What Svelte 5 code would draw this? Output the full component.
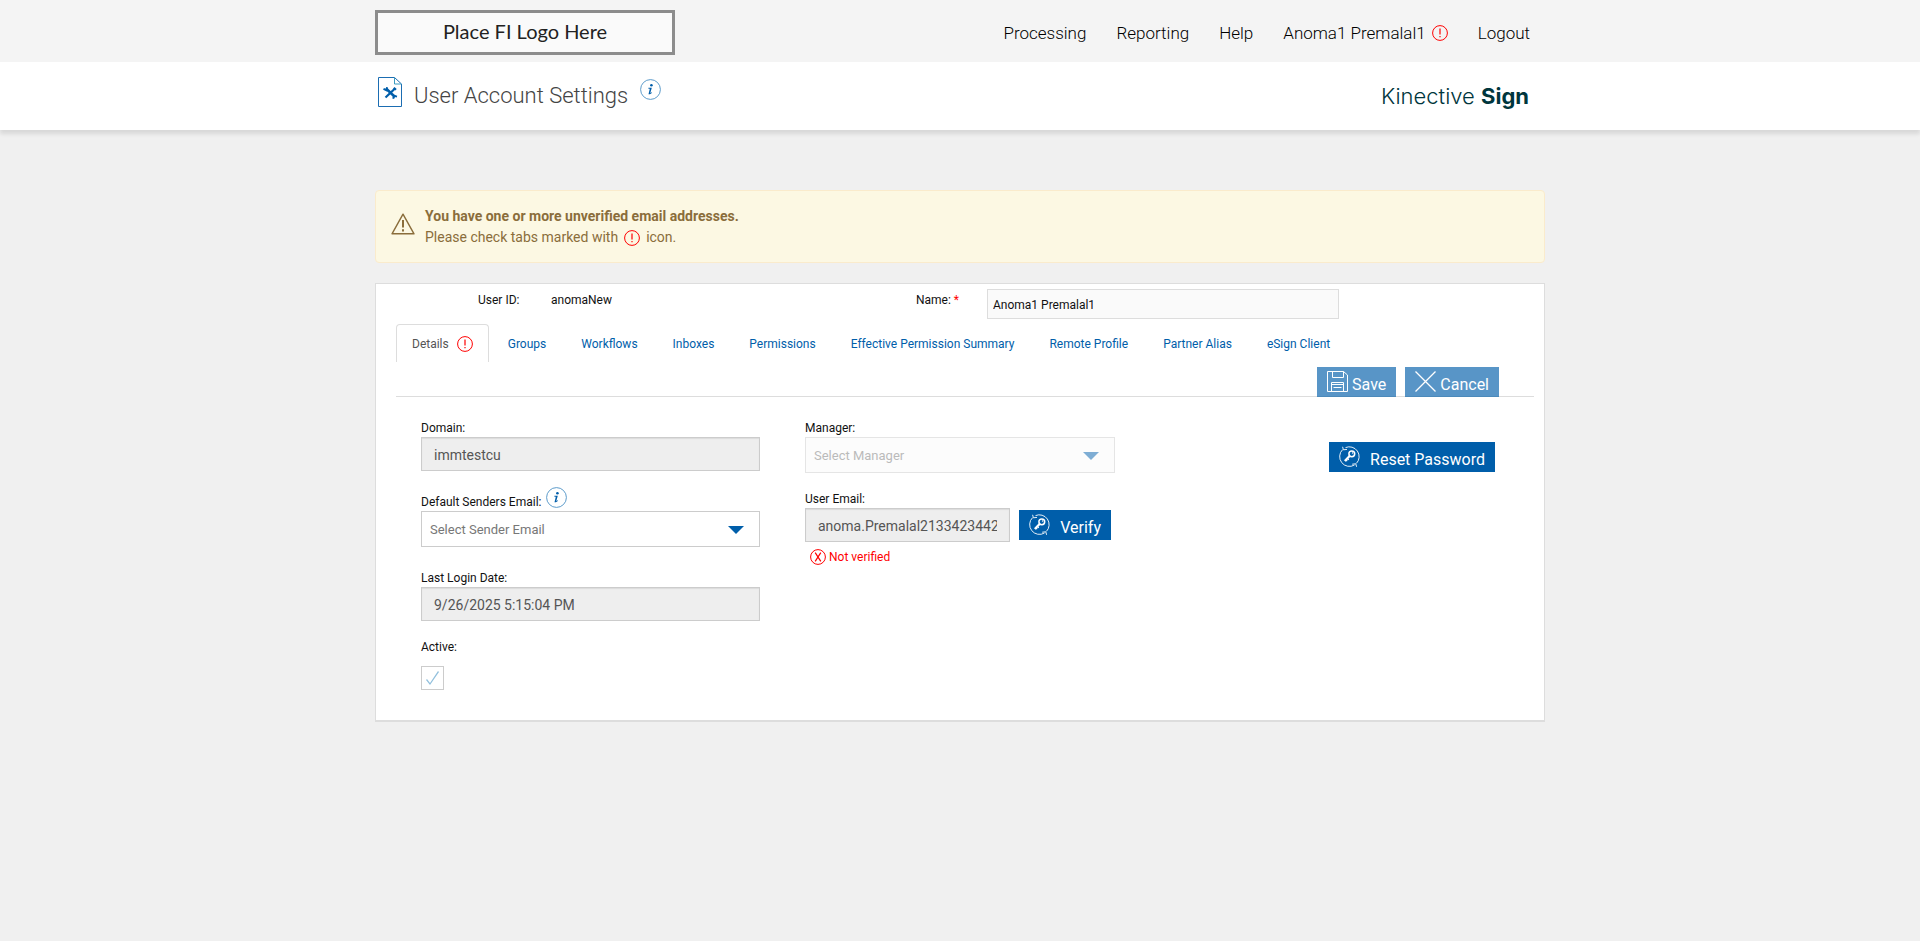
<script>
  // Top navigation links
  const navItems = [
    { label: "Processing", href: "#processing" },
    { label: "Reporting", href: "#reporting" },
    { label: "Help", href: "#help" },
    { label: "Anoma1 Premalal1", href: "#account", alert: true },
    { label: "Logout", href: "#logout" }
  ];

  // Settings tabs, the first one holds the form below
  const tabs = [
    { label: "Details", alert: true },
    { label: "Groups" },
    { label: "Workflows" },
    { label: "Inboxes" },
    { label: "Permissions" },
    { label: "Effective Permission Summary" },
    { label: "Remote Profile" },
    { label: "Partner Alias" },
    { label: "eSign Client" }
  ];

  let activeTab = "Details";
  let name = "Anoma1 Premalal1";
</script>

{#snippet alertIcon()}
  <svg viewBox="0 0 16 16" width="16" height="16" aria-hidden="true">
    <circle cx="8" cy="8" r="7.4" fill="none" stroke="#f00" stroke-width="1" />
    <path d="M8 3.5v6M8 11v1.2" fill="none" stroke="#f00" stroke-width="1.2" />
  </svg>
{/snippet}

{#snippet infoIcon()}
  <svg viewBox="0 0 21 21" width="21" height="21" aria-hidden="true">
    <circle cx="10.5" cy="10.5" r="9.9" fill="none" stroke="#4a90c4" stroke-width="0.9" />
    <circle cx="11.4" cy="6.3" r="1.3" fill="#005eaa" />
    <path d="M8.4 8.8h3.4l-1.5 5.2 1.6-.8v.8l-2 1.2H8.5l1.3-5.5H8.4z" fill="#005eaa" />
  </svg>
{/snippet}

{#snippet keyIcon()}
  <svg viewBox="0 0 21 21" width="21" height="21" fill="none" stroke="#fff" aria-hidden="true">
    <path d="M3.6 3.6A9.8 9.8 0 0 0 15.5 19M17.4 17.4A9.8 9.8 0 0 0 6.5 1.6" stroke-width="0.9" />
    <path d="M3.6.8l.8 3 3.6-.4M13.2 18.2l3.6-.4.8 3" stroke-width="0.9" />
    <circle cx="12.8" cy="7.8" r="2.9" stroke-width="1.5" />
    <circle cx="13.6" cy="7" r=".8" fill="#fff" stroke="none" />
    <path d="M10.8 9.8l-5 5.2" stroke-width="2.2" />
    <path d="M8.6 12.6l1.2 1.2M7 14l1.2 1.2" stroke-width="1.2" />
  </svg>
{/snippet}

{#snippet arrow()}
  <svg class="arrow" viewBox="0 0 16 8" width="16" height="8" aria-hidden="true">
    <path d="M0 0h16L8 8z" fill="#005eaa" />
  </svg>
{/snippet}

<header class="topbar">
  <div class="container topbar-inner">
    <div class="fi-logo">Place FI Logo Here</div>
    <nav>
      {#each navItems as item}
        <a href={item.href}>
          {item.label}
          {#if item.alert}{@render alertIcon()}{/if}
        </a>
      {/each}
    </nav>
  </div>
</header>

<div class="titlebar">
  <div class="container titlebar-inner">
    <svg class="page-icon" viewBox="0 0 24 30" width="24" height="30" aria-hidden="true">
      <path d="M.5.5h16l7 6.5v22.5H.5z" fill="#fff" stroke="#1b6db2" />
      <path d="M16.5.5v6.5h7" fill="none" stroke="#3b9bc0" />
      <path d="M8 11.5l9 8.5" stroke="#005eaa" stroke-width="2.6" />
      <path d="M17 11.5l-9.5 9" stroke="#005eaa" stroke-width="2.2" />
      <path d="M5.5 11.8l3 1.4.6-3M19 19.6l-3-.8-.8 3" fill="none" stroke="#005eaa" stroke-width="2" />
      <path d="M15.8 10.8l2.2 2" stroke="#005eaa" stroke-width="2" />
    </svg>
    <h1>User Account Settings</h1>
    <button class="info title-info" aria-label="About user account settings">{@render infoIcon()}</button>
    <div class="brand">Kinective <b>Sign</b></div>
  </div>
</div>

<main class="container">
  <div class="warning" role="alert">
    <svg class="warning-icon" viewBox="0 0 24 22" width="24" height="22" fill="none" stroke="#8a6d3b" aria-hidden="true">
      <path d="M12 1.2L23 20.8H1z" stroke-width="1.4" stroke-linejoin="round" />
      <path d="M12 7v7.5M12 16.3v2.2" stroke-width="2" />
    </svg>
    <div>
      <strong>You have one or more unverified email addresses.</strong>
      <p>Please check tabs marked with {@render alertIcon()} icon.</p>
    </div>
  </div>

  <section class="panel">
    <div class="identity">
      <span class="identity-label">User ID:</span>
      <span class="user-id">anomaNew</span>
      <label for="name">Name: <span class="required">*</span></label>
      <input id="name" type="text" bind:value={name} />
    </div>

    <div class="tabs" role="tablist">
      {#each tabs as tab}
        <button
          role="tab"
          class="tab"
          class:active={activeTab === tab.label}
          aria-selected={activeTab === tab.label}
          on:click={() => (activeTab = tab.label)}
        >
          {tab.label}
          {#if tab.alert}{@render alertIcon()}{/if}
        </button>
      {/each}
    </div>

    <div class="actions">
      <button class="btn" disabled>
        <svg viewBox="0 0 21 21" width="21" height="21" fill="none" stroke="#fff" aria-hidden="true">
          <path d="M.5.5h16l4 3.5v16.5H.5z" />
          <path d="M5.5.5v6h11v-6M4.5 20.5v-9h12v9M5 13.5h11M6.5 16.5h8" />
        </svg>
        Save
      </button>
      <button class="btn" disabled>
        <svg viewBox="0 0 21 21" width="21" height="21" fill="none" stroke="#fff" stroke-width="1.3" aria-hidden="true">
          <path d="M.5.5l20 20M20.5.5l-20 20" />
        </svg>
        Cancel
      </button>
    </div>

    <form class="details" on:submit|preventDefault>
      <div class="column">
        <div class="field">
          <label for="domain">Domain:</label>
          <input id="domain" class="readonly" type="text" value="immtestcu" readonly />
        </div>
        <div class="field">
          <div class="label-row">
            <label for="sender">Default Senders Email:</label>
            <button type="button" class="info" aria-label="About default senders email">{@render infoIcon()}</button>
          </div>
          <div class="select">
            <select id="sender"><option>Select Sender Email</option></select>
            {@render arrow()}
          </div>
        </div>
        <div class="field">
          <div class="label-row"><label for="login">Last Login Date:</label></div>
          <input id="login" class="readonly" type="text" value="9/26/2025 5:15:04 PM" readonly />
        </div>
        <div class="field check-field">
          <label for="active">Active:</label>
          <input id="active" type="checkbox" checked disabled />
        </div>
      </div>

      <div class="column contact">
        <div class="field">
          <label for="manager">Manager:</label>
          <div class="select disabled">
            <select id="manager" disabled><option>Select Manager</option></select>
            {@render arrow()}
          </div>
        </div>
        <div class="field">
          <label for="email">User Email:</label>
          <div class="email-row">
            <input id="email" class="readonly" type="text" value="anoma.Premalal2133423442" readonly />
            <button type="button" class="btn wide">{@render keyIcon()} Verify</button>
          </div>
          <div class="status">
            <svg viewBox="0 0 16 16" width="16" height="16" fill="none" stroke="#f00" aria-hidden="true">
              <circle cx="8" cy="8" r="7.4" />
              <path d="M5.2 3.6l5.6 8.8M10.8 3.6l-5.6 8.8" stroke-width="1.2" />
            </svg>
            Not verified
          </div>
        </div>
      </div>

      <div class="column side">
        <button type="button" class="btn wide">{@render keyIcon()} Reset Password</button>
      </div>
    </form>
  </section>
</main>

<style>
  :global(body) {
    background-color: #f0f0f0;
    font-family: Roboto, "Liberation Sans", sans-serif;
    font-size: 12px;
    color: #111;
  }

  button,
  input,
  select {
    font-family: inherit;
    box-sizing: border-box;
    margin: 0;
    border-radius: 0;
  }

  svg {
    flex: none;
  }

  .container {
    max-width: 1170px;
    margin: 0 auto;
  }

  .topbar {
    background-color: #f4f4f4;
  }

  .topbar-inner {
    display: flex;
    align-items: center;
    justify-content: space-between;
    padding: 10px 0 7px;
  }

  .fi-logo {
    width: 300px;
    box-sizing: border-box;
    padding-bottom: 2px;
    border: 3px solid #8c8c8c;
    background-color: #fafafa;
    color: #222;
    font-family: Lato, sans-serif;
    font-size: 20px;
    line-height: 37px;
    text-align: center;
  }

  nav {
    display: flex;
    gap: 30px;
    padding-right: 15px;
  }

  nav a {
    display: flex;
    align-items: center;
    gap: 6px;
    color: #000;
    font-size: 17px;
    font-weight: 300;
    line-height: 24px;
    text-decoration: none;
  }

  .titlebar {
    background-color: #fff;
    box-shadow: 0 4px 4px rgba(0, 0, 0, 0.1);
  }

  .titlebar-inner {
    display: flex;
    align-items: center;
    height: 68px;
  }

  .page-icon {
    margin: 0 12px 8px 3px;
  }

  h1 {
    margin: 0;
    color: #444;
    font-size: 22px;
    font-weight: 300;
    line-height: 34px;
  }

  .info {
    display: flex;
    padding: 0;
    border: none;
    background: none;
    cursor: pointer;
  }

  .title-info {
    margin: 0 0 14px 12px;
  }

  .brand {
    margin-left: auto;
    padding-right: 16px;
    color: #00363d;
    font-family: Inter, sans-serif;
    font-size: 22px;
    font-weight: 300;
    line-height: 32px;
  }

  .brand b {
    font-weight: 700;
  }

  .warning {
    display: flex;
    align-items: center;
    gap: 10px;
    margin-top: 60px;
    padding: 15px 15px 14px;
    border: 1px solid #faebcc;
    border-radius: 4px;
    background-color: #fcf8e3;
    color: #8a6d3b;
    font-size: 14px;
    line-height: 21px;
  }

  .warning-icon {
    margin-bottom: 6px;
  }

  .warning p {
    display: flex;
    align-items: center;
    gap: 6px;
    margin: 0;
  }

  .panel {
    margin-top: 20px;
    padding-bottom: 30px;
    border: 1px solid #ddd;
    border-bottom-width: 2px;
    background-color: #fff;
  }

  .identity {
    display: flex;
    align-items: flex-start;
    padding: 5px 0 5px 102px;
    line-height: 22px;
  }

  .user-id {
    flex: 0 0 365px;
  }

  .identity-label {
    flex: 0 0 73px;
  }

  .identity label {
    flex: 0 0 71px;
  }

  .required {
    color: #f00;
  }

  #name {
    width: 352px;
    height: 30px;
    padding: 2px 5px 0;
    border: 1px solid #ddd;
    background-color: #fafafa;
    color: #111;
    font-size: 12px;
  }

  .tabs {
    display: flex;
    gap: 3px;
    margin: 0 10px 0 20px;
  }

  .tab {
    display: flex;
    align-items: center;
    gap: 8px;
    height: 38px;
    padding: 0 15px;
    border: 1px solid transparent;
    border-bottom: none;
    background: none;
    color: #005eaa;
    font-size: 12px;
    cursor: pointer;
  }

  .tab.active {
    border-color: #ddd;
    border-radius: 4px 4px 0 0;
    color: #555;
  }

  .actions {
    display: flex;
    justify-content: flex-end;
    gap: 9px;
    margin: 0 10px 0 20px;
    padding: 5px 35px 0 0;
    border-bottom: 1px solid #ddd;
  }

  .actions .btn {
    margin-bottom: -1px;
  }

  .btn {
    display: flex;
    align-items: flex-start;
    gap: 4px;
    height: 30px;
    padding: 4px 10px 0;
    border: none;
    background-color: #005eaa;
    color: #fff;
    font-size: 16px;
    line-height: 27px;
    white-space: nowrap;
    cursor: pointer;
  }

  .btn.wide {
    gap: 10px;
  }

  .btn:disabled {
    opacity: 0.65;
    cursor: default;
  }

  .details {
    display: grid;
    grid-template-columns: 339fr 310fr 335fr;
    gap: 45px;
    padding: 23px 49px 0 45px;
  }

  .column {
    display: flex;
    flex-direction: column;
    gap: 16px;
  }

  .column.contact {
    gap: 18px;
  }

  .field {
    display: flex;
    flex-direction: column;
  }

  .field label {
    line-height: 17px;
  }

  .label-row {
    display: flex;
    align-items: flex-end;
    gap: 5px;
    height: 24px;
  }

  .label-row .info {
    align-self: flex-start;
  }

  .readonly {
    width: 100%;
    height: 34px;
    padding: 2px 12px 0;
    border: 1px solid #ccc;
    background-color: #eee;
    box-shadow: inset 0 1px 1px rgba(0, 0, 0, 0.08);
    color: #555;
    font-size: 14px;
  }

  .select {
    position: relative;
  }

  select {
    display: block;
    width: 100%;
    height: 36px;
    padding: 0 8px;
    appearance: none;
    border: 1px solid #ccc;
    background-color: #fff;
    color: #777;
    font-size: 13px;
    opacity: 1;
  }

  .select.disabled {
    opacity: 0.5;
  }

  .select.disabled select {
    background-color: #fafafa;
  }

  .arrow {
    position: absolute;
    top: 15px;
    right: 16px;
    pointer-events: none;
  }

  .email-row {
    display: flex;
    align-items: center;
    gap: 9px;
    padding-right: 4px;
  }

  .email-row .readonly {
    flex: 1;
    min-width: 0;
  }

  .status {
    display: flex;
    align-items: center;
    gap: 3px;
    padding: 7px 5px 0;
    color: #f00;
    line-height: 16px;
  }

  .check-field {
    align-items: flex-start;
    gap: 10px;
    padding-top: 2px;
  }

  #active {
    display: grid;
    place-items: center;
    width: 23px;
    height: 24px;
    appearance: none;
    border: 1px solid #ccc;
    background-color: #fff;
  }

  #active:checked::before {
    content: "";
    width: 13px;
    height: 14px;
    background-color: #92c0dd;
    clip-path: polygon(0 9px, 1px 8px, 4px 12px, 12px 0, 13px 1px, 4px 14px);
  }

  .side {
    align-items: flex-end;
    padding-top: 22px;
  }
</style>
